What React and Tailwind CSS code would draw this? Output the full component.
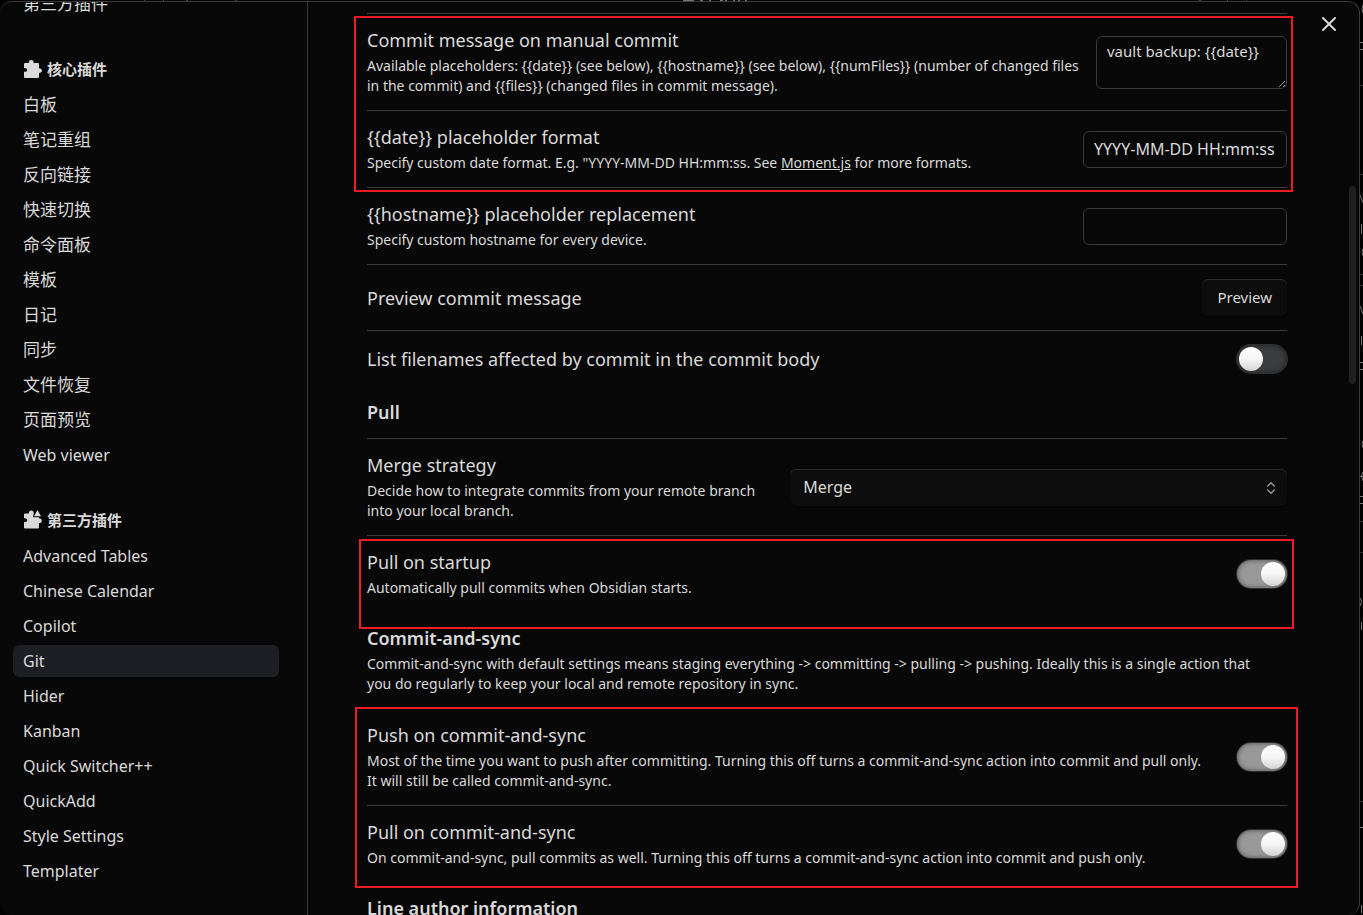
import React from "react";
import { X, ChevronsUpDown } from "lucide-react";

const coreItems = ["白板", "笔记重组", "反向链接", "快速切换", "命令面板", "模板", "日记", "同步", "文件恢复", "页面预览", "Web viewer"];
const communityItems = ["Advanced Tables", "Chinese Calendar", "Copilot", "Git", "Hider", "Kanban", "Quick Switcher++", "QuickAdd", "Style Settings", "Templater"];

function PuzzleIcon() {
  return (
    <svg viewBox="0 0 20 20" className="size-5 fill-[#dadada]" aria-hidden="true">
      <path d="M3 4h3.800C6.800 2.300 7.800 1 9.300 1s2.500 1.300 2.500 3H16a1 1 0 0 1 1 1v4.200c1.700 0 3 .9 3 2.400S18.700 14 17 14v4a1 1 0 0 1-1 1H3a1 1 0 0 1-1-1v-5.200c1.700.3 3.200-.5 3.200-1.900S3.700 8.700 2 9V5a1 1 0 0 1 1-1z" />
    </svg>
  );
}

function PuzzleTriangleIcon() {
  return (
    <svg viewBox="0 0 20 20" className="size-5 fill-[#dadada]" aria-hidden="true">
      <path d="M3 3.500h3.800C6.800 1.800 7.800.6 9.300.6s2.500 1.200 2.500 2.900L11 7.200h6v1.100c1.700 0 2.800.9 2.800 2.400s-1.100 2.400-2.800 2.400V17.500a1 1 0 0 1-1 1H3a1 1 0 0 1-1-1v-5.400c1.700.3 3.200-.5 3.200-1.900S3.700 8 2 8.300V4.500a1 1 0 0 1 1-1z" />
      <path d="M15.500 0 19 6.200h-7z" />
    </svg>
  );
}

function NavItem({ label, active }) {
  const latin = /^[A-Z]/.test(label);
  return (
    <li>
      <a
        href="#"
        aria-current={active ? "page" : undefined}
        className={"flex h-8 items-center rounded-md px-[10px] " + (latin ? "text-[16px] " : "text-[17px] ") + (active ? "bg-[#1e1f24]" : "")}
      >
        {label}
      </a>
    </li>
  );
}

function NavSection({ title, icon, items, current }) {
  return (
    <section>
      <h2 className="mb-2 flex h-6 items-center gap-[5px] pl-[9px] text-[15px] font-bold">
        {icon}
        {title}
      </h2>
      <ul className="flex flex-col gap-[3px]">
        {items.map((item) => (
          <NavItem key={item} label={item} active={item === current} />
        ))}
      </ul>
    </section>
  );
}

function Setting({ id, name, desc, children }) {
  return (
    <div className="flex items-center border-t border-[#3a3a3a] py-[14px]">
      <div className="min-w-0 flex-1 pr-4">
        <label htmlFor={id} className="block text-[18px] leading-6">{name}</label>
        {desc && <p className="mt-1 text-[14px] leading-5">{desc}</p>}
      </div>
      {children}
    </div>
  );
}

function Toggle({ id, defaultChecked }) {
  return (
    <input
      id={id}
      type="checkbox"
      role="switch"
      defaultChecked={defaultChecked}
      className="mr-0 flex h-7 w-[50px] shrink-0 appearance-none items-center rounded-full bg-[#3b3c3e] px-[2px] shadow-[inset_0_0_5px_rgba(0,0,0,0.5),0_0_0_1px_#303030] before:size-6 before:rounded-full before:bg-linear-to-b before:from-white before:via-[#f6f6f6] before:to-[#d4d4d4] before:content-[''] checked:justify-end checked:bg-[#989898]"
    />
  );
}

function Heading({ children }) {
  return <h3 className="text-[18px] leading-6 font-semibold">{children}</h3>;
}

/* Slivers of the workspace that show past the dialog's edges. */
function WorkspaceEdges() {
  return (
    <>
      <svg className="absolute top-0 left-0 h-px w-full" aria-hidden="true" stroke="#777">
        <path d="M683 .5h11M700 .5h3M709 .5h2M720 .5h3M725 .5h2M733 .5h2M738 .5h2M745 .5h2" />
        <path d="M144 .5h1M163 .5h1M186 .5h2M235 .5h2M1199 .5h2M1227 .5h1M1246 .5h1" stroke="#444" />
      </svg>
      <svg className="absolute top-0 right-0 h-full w-[3px]" aria-hidden="true" fill="none">
        <path d="M0 85.500h3M0 174.500h3M0 274.500h3M0 285.500h3M0 521.500h3M0 552.500h3M0 801.500h3" stroke="#2c2c2c" />
        <path d="M3 5q-2 3 0 8M0 42.500h3M0 49.500h3M0 195l3 8M1.500 224v10M3 249q-2 3 0 7M0 306l3 8M1.500 336v9M0 362.500h3M0 369.500h3M3 441q-2 3 0 7M0 476.500h3M3 472q-3 4 0 9M0 496.500h3M0 503.500h3M0 598q3 3 0 8M1.500 622v8M0 827.500h3M1.500 905v8" stroke="#777" />
      </svg>
    </>
  );
}

const fieldClass = "shrink-0 rounded-md border border-[#3a3a3a] bg-[#080808] px-[10px] outline-none";

export default function App() {
  return (
    <div className="relative h-screen overflow-hidden bg-black pt-px pr-[3px] font-['Noto_Sans','Noto_Sans_CJK_SC',sans-serif] text-[#dadada]">
      <WorkspaceEdges />
      <div className="relative flex h-full overflow-hidden rounded-xl border-t border-r border-[#3a3a3a] bg-[#080808]">
        <nav className="w-[308px] shrink-0 overflow-hidden border-r border-[#3a3a3a] pr-7 pl-[13px]">
          <div className="-mt-[14px] flex flex-col gap-[37px]">
            <ul>
              <NavItem label="第三方插件" />
            </ul>
            <NavSection title="核心插件" icon={<PuzzleIcon />} items={coreItems} />
            <NavSection title="第三方插件" icon={<PuzzleTriangleIcon />} items={communityItems} current="Git" />
          </div>
        </nav>

        <main className="min-w-0 flex-1 overflow-hidden pt-[11px] pr-[72px] pl-[59px]">
          <div className="relative">
            <Setting
              id="message"
              name="Commit message on manual commit"
              desc="Available placeholders: {{date}} (see below), {{hostname}} (see below), {{numFiles}} (number of changed files in the commit) and {{files}} (changed files in commit message)."
            >
              <textarea id="message" defaultValue="vault backup: {{date}}" className={fieldClass + " h-[53px] w-[191px] resize py-1 text-[15px] leading-5"} />
            </Setting>
            <Setting
              id="date"
              name="{{date}} placeholder format"
              desc={
                <>
                  Specify custom date format. E.g. "YYYY-MM-DD HH:mm:ss. See <a href="#" className="underline">Moment.js</a> for more formats.
                </>
              }
            >
              <input id="date" defaultValue="YYYY-MM-DD HH:mm:ss" className={fieldClass + " h-[37px] w-[204px] text-[16px]"} />
            </Setting>
            <div className="pointer-events-none absolute top-[3px] -right-[6px] -bottom-[5px] -left-[13px] border-2 border-[#ed1c24]" />
          </div>
          <Setting id="hostname" name="{{hostname}} placeholder replacement" desc="Specify custom hostname for every device.">
            <input id="hostname" className={fieldClass + " h-[37px] w-[204px] text-[16px]"} />
          </Setting>
          <Setting id="preview" name="Preview commit message">
            <button id="preview" className="h-[37px] shrink-0 rounded-md bg-[#0d0d0d] px-[15px] text-[15px] shadow-[inset_0_1px_0_#2c2c2c,0_1px_2px_#000]">Preview</button>
          </Setting>
          <Setting id="list" name="List filenames affected by commit in the commit body">
            <Toggle id="list" />
          </Setting>

          <div className="pt-[13px] pb-[14px]">
            <Heading>Pull</Heading>
          </div>
          <Setting id="merge" name="Merge strategy" desc="Decide how to integrate commits from your remote branch into your local branch.">
            <div className="relative w-[54%] shrink-0">
              <select id="merge" className="h-[37px] w-full appearance-none rounded-md bg-[#0d0d0d] px-[13px] text-[16px] shadow-[inset_0_1px_0_#2c2c2c,0_1px_2px_#000]">
                <option>Merge</option>
              </select>
              <ChevronsUpDown className="pointer-events-none absolute top-[11px] right-2 size-4 text-[#999]" strokeWidth={2} />
            </div>
          </Setting>
          <div className="relative">
            <Setting id="startup" name="Pull on startup" desc="Automatically pull commits when Obsidian starts.">
              <Toggle id="startup" defaultChecked />
            </Setting>
            <div className="pointer-events-none absolute top-1 -right-[7px] -bottom-[17px] -left-2 border-2 border-[#ed1c24]" />
          </div>

          <div className="py-[14px]">
            <Heading>Commit-and-sync</Heading>
            <p className="mt-1 pr-4 text-[14px] leading-5">
              Commit-and-sync with default settings means staging everything -&gt; committing -&gt; pulling -&gt; pushing. Ideally this is a single action that you do regularly to keep your local and remote repository in sync.
            </p>
          </div>
          <div className="relative">
            <Setting id="push" name="Push on commit-and-sync" desc={"Most of the time you want to push after committing. Turning this off turns a commit-and-sync action into commit and pull only. It\u00a0will still be called commit-and-sync."}>
              <Toggle id="push" defaultChecked />
            </Setting>
            <Setting id="pull" name="Pull on commit-and-sync" desc="On commit-and-sync, pull commits as well. Turning this off turns a commit-and-sync action into commit and push only.">
              <Toggle id="pull" defaultChecked />
            </Setting>
            <div className="pointer-events-none absolute -top-px -right-[11px] -bottom-[6px] -left-3 border-2 border-[#ed1c24]" />
          </div>
          <div className="pt-[14px]">
            <Heading>Line author information</Heading>
          </div>
        </main>

        <button aria-label="Close" className="absolute top-[10px] right-[18px]">
          <X className="size-6" strokeWidth={2} />
        </button>
        <div className="absolute top-[184px] right-[3px] h-[198px] w-[7px] rounded-full bg-[#202020]" />
      </div>
    </div>
  );
}
